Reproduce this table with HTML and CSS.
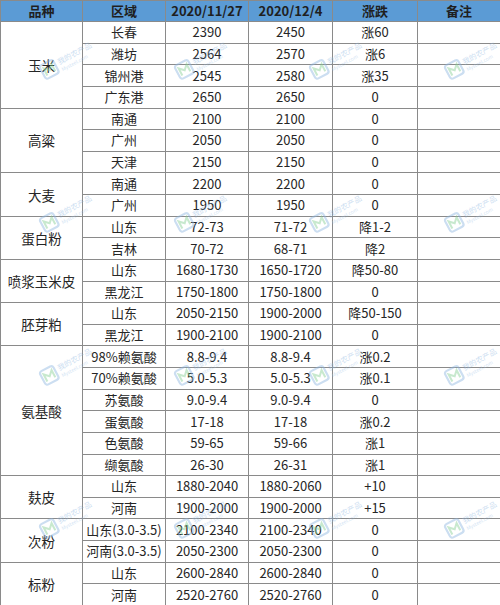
FILE: index.html
```html
<!DOCTYPE html>
<html lang="zh">
<head>
<meta charset="utf-8">
<title>价格表</title>
<link rel="stylesheet" href="styles.css">
</head>
<body>
<div class="page">
<table class="grid">
<colgroup>
<col class="c1"><col class="c2"><col class="c3"><col class="c4"><col class="c5"><col class="c6">
</colgroup>
<thead>
<tr><th>品种</th><th>区域</th><th>2020/11/27</th><th>2020/12/4</th><th>涨跌</th><th>备注</th></tr>
</thead>
<tbody>
<tr><td rowspan="4" class="kind">玉米</td><td>长春</td><td>2390</td><td>2450</td><td>涨60</td><td></td></tr>
<tr><td>潍坊</td><td>2564</td><td>2570</td><td>涨6</td><td></td></tr>
<tr><td>锦州港</td><td>2545</td><td>2580</td><td>涨35</td><td></td></tr>
<tr><td>广东港</td><td>2650</td><td>2650</td><td>0</td><td></td></tr>
<tr><td rowspan="3" class="kind">高粱</td><td>南通</td><td>2100</td><td>2100</td><td>0</td><td></td></tr>
<tr><td>广州</td><td>2050</td><td>2050</td><td>0</td><td></td></tr>
<tr><td>天津</td><td>2150</td><td>2150</td><td>0</td><td></td></tr>
<tr><td rowspan="2" class="kind">大麦</td><td>南通</td><td>2200</td><td>2200</td><td>0</td><td></td></tr>
<tr><td>广州</td><td>1950</td><td>1950</td><td>0</td><td></td></tr>
<tr><td rowspan="2" class="kind">蛋白粉</td><td>山东</td><td>72-73</td><td>71-72</td><td>降1-2</td><td></td></tr>
<tr><td>吉林</td><td>70-72</td><td>68-71</td><td>降2</td><td></td></tr>
<tr><td rowspan="2" class="kind">喷浆玉米皮</td><td>山东</td><td>1680-1730</td><td>1650-1720</td><td>降50-80</td><td></td></tr>
<tr><td>黑龙江</td><td>1750-1800</td><td>1750-1800</td><td>0</td><td></td></tr>
<tr><td rowspan="2" class="kind">胚芽粕</td><td>山东</td><td>2050-2150</td><td>1900-2000</td><td>降50-150</td><td></td></tr>
<tr><td>黑龙江</td><td>1900-2100</td><td>1900-2100</td><td>0</td><td></td></tr>
<tr><td rowspan="6" class="kind">氨基酸</td><td>98%赖氨酸</td><td>8.8-9.4</td><td>8.8-9.4</td><td>涨0.2</td><td></td></tr>
<tr><td>70%赖氨酸</td><td>5.0-5.3</td><td>5.0-5.3</td><td>涨0.1</td><td></td></tr>
<tr><td>苏氨酸</td><td>9.0-9.4</td><td>9.0-9.4</td><td>0</td><td></td></tr>
<tr><td>蛋氨酸</td><td>17-18</td><td>17-18</td><td>涨0.2</td><td></td></tr>
<tr><td>色氨酸</td><td>59-65</td><td>59-66</td><td>涨1</td><td></td></tr>
<tr><td>缬氨酸</td><td>26-30</td><td>26-31</td><td>涨1</td><td></td></tr>
<tr><td rowspan="2" class="kind">麸皮</td><td>山东</td><td>1880-2040</td><td>1880-2060</td><td>+10</td><td></td></tr>
<tr><td>河南</td><td>1900-2000</td><td>1900-2000</td><td>+15</td><td></td></tr>
<tr><td rowspan="2" class="kind">次粉</td><td>山东(3.0-3.5)</td><td>2100-2340</td><td>2100-2340</td><td>0</td><td></td></tr>
<tr><td>河南(3.0-3.5)</td><td>2050-2300</td><td>2050-2300</td><td>0</td><td></td></tr>
<tr><td rowspan="2" class="kind">标粉</td><td>山东</td><td>2600-2840</td><td>2600-2840</td><td>0</td><td></td></tr>
<tr><td>河南</td><td>2520-2760</td><td>2520-2760</td><td>0</td><td></td></tr>
</tbody>
</table>
<div class="marks" aria-hidden="true">
<div class="mark"><svg viewBox="0 0 60 24" width="60" height="24"><rect x="1.5" y="4" width="15" height="15" rx="2.5" fill="none" stroke="#8fb8e2" stroke-width="2.2"/><path d="M4.5 16 V8 L9 12.5 L13.5 8 V16" fill="none" stroke="#86cf95" stroke-width="2"/><text x="20" y="12" font-size="7.5" fill="#8fb8e2">我的农产品</text><text x="20" y="19.5" font-size="5" fill="#9fc4e8">Mysteel.com</text></svg></div>
<div class="mark"><svg viewBox="0 0 60 24" width="60" height="24"><rect x="1.5" y="4" width="15" height="15" rx="2.5" fill="none" stroke="#8fb8e2" stroke-width="2.2"/><path d="M4.5 16 V8 L9 12.5 L13.5 8 V16" fill="none" stroke="#86cf95" stroke-width="2"/><text x="20" y="12" font-size="7.5" fill="#8fb8e2">我的农产品</text><text x="20" y="19.5" font-size="5" fill="#9fc4e8">Mysteel.com</text></svg></div>
<div class="mark"><svg viewBox="0 0 60 24" width="60" height="24"><rect x="1.5" y="4" width="15" height="15" rx="2.5" fill="none" stroke="#8fb8e2" stroke-width="2.2"/><path d="M4.5 16 V8 L9 12.5 L13.5 8 V16" fill="none" stroke="#86cf95" stroke-width="2"/><text x="20" y="12" font-size="7.5" fill="#8fb8e2">我的农产品</text><text x="20" y="19.5" font-size="5" fill="#9fc4e8">Mysteel.com</text></svg></div>
<div class="mark"><svg viewBox="0 0 60 24" width="60" height="24"><rect x="1.5" y="4" width="15" height="15" rx="2.5" fill="none" stroke="#8fb8e2" stroke-width="2.2"/><path d="M4.5 16 V8 L9 12.5 L13.5 8 V16" fill="none" stroke="#86cf95" stroke-width="2"/><text x="20" y="12" font-size="7.5" fill="#8fb8e2">我的农产品</text><text x="20" y="19.5" font-size="5" fill="#9fc4e8">Mysteel.com</text></svg></div>
<div class="mark"><svg viewBox="0 0 60 24" width="60" height="24"><rect x="1.5" y="4" width="15" height="15" rx="2.5" fill="none" stroke="#8fb8e2" stroke-width="2.2"/><path d="M4.5 16 V8 L9 12.5 L13.5 8 V16" fill="none" stroke="#86cf95" stroke-width="2"/><text x="20" y="12" font-size="7.5" fill="#8fb8e2">我的农产品</text><text x="20" y="19.5" font-size="5" fill="#9fc4e8">Mysteel.com</text></svg></div>
<div class="mark"><svg viewBox="0 0 60 24" width="60" height="24"><rect x="1.5" y="4" width="15" height="15" rx="2.5" fill="none" stroke="#8fb8e2" stroke-width="2.2"/><path d="M4.5 16 V8 L9 12.5 L13.5 8 V16" fill="none" stroke="#86cf95" stroke-width="2"/><text x="20" y="12" font-size="7.5" fill="#8fb8e2">我的农产品</text><text x="20" y="19.5" font-size="5" fill="#9fc4e8">Mysteel.com</text></svg></div>
<div class="mark"><svg viewBox="0 0 60 24" width="60" height="24"><rect x="1.5" y="4" width="15" height="15" rx="2.5" fill="none" stroke="#8fb8e2" stroke-width="2.2"/><path d="M4.5 16 V8 L9 12.5 L13.5 8 V16" fill="none" stroke="#86cf95" stroke-width="2"/><text x="20" y="12" font-size="7.5" fill="#8fb8e2">我的农产品</text><text x="20" y="19.5" font-size="5" fill="#9fc4e8">Mysteel.com</text></svg></div>
<div class="mark"><svg viewBox="0 0 60 24" width="60" height="24"><rect x="1.5" y="4" width="15" height="15" rx="2.5" fill="none" stroke="#8fb8e2" stroke-width="2.2"/><path d="M4.5 16 V8 L9 12.5 L13.5 8 V16" fill="none" stroke="#86cf95" stroke-width="2"/><text x="20" y="12" font-size="7.5" fill="#8fb8e2">我的农产品</text><text x="20" y="19.5" font-size="5" fill="#9fc4e8">Mysteel.com</text></svg></div>
<div class="mark"><svg viewBox="0 0 60 24" width="60" height="24"><rect x="1.5" y="4" width="15" height="15" rx="2.5" fill="none" stroke="#8fb8e2" stroke-width="2.2"/><path d="M4.5 16 V8 L9 12.5 L13.5 8 V16" fill="none" stroke="#86cf95" stroke-width="2"/><text x="20" y="12" font-size="7.5" fill="#8fb8e2">我的农产品</text><text x="20" y="19.5" font-size="5" fill="#9fc4e8">Mysteel.com</text></svg></div>
<div class="mark"><svg viewBox="0 0 60 24" width="60" height="24"><rect x="1.5" y="4" width="15" height="15" rx="2.5" fill="none" stroke="#8fb8e2" stroke-width="2.2"/><path d="M4.5 16 V8 L9 12.5 L13.5 8 V16" fill="none" stroke="#86cf95" stroke-width="2"/><text x="20" y="12" font-size="7.5" fill="#8fb8e2">我的农产品</text><text x="20" y="19.5" font-size="5" fill="#9fc4e8">Mysteel.com</text></svg></div>
<div class="mark"><svg viewBox="0 0 60 24" width="60" height="24"><rect x="1.5" y="4" width="15" height="15" rx="2.5" fill="none" stroke="#8fb8e2" stroke-width="2.2"/><path d="M4.5 16 V8 L9 12.5 L13.5 8 V16" fill="none" stroke="#86cf95" stroke-width="2"/><text x="20" y="12" font-size="7.5" fill="#8fb8e2">我的农产品</text><text x="20" y="19.5" font-size="5" fill="#9fc4e8">Mysteel.com</text></svg></div>
<div class="mark"><svg viewBox="0 0 60 24" width="60" height="24"><rect x="1.5" y="4" width="15" height="15" rx="2.5" fill="none" stroke="#8fb8e2" stroke-width="2.2"/><path d="M4.5 16 V8 L9 12.5 L13.5 8 V16" fill="none" stroke="#86cf95" stroke-width="2"/><text x="20" y="12" font-size="7.5" fill="#8fb8e2">我的农产品</text><text x="20" y="19.5" font-size="5" fill="#9fc4e8">Mysteel.com</text></svg></div>
<div class="mark"><svg viewBox="0 0 60 24" width="60" height="24"><rect x="1.5" y="4" width="15" height="15" rx="2.5" fill="none" stroke="#8fb8e2" stroke-width="2.2"/><path d="M4.5 16 V8 L9 12.5 L13.5 8 V16" fill="none" stroke="#86cf95" stroke-width="2"/><text x="20" y="12" font-size="7.5" fill="#8fb8e2">我的农产品</text><text x="20" y="19.5" font-size="5" fill="#9fc4e8">Mysteel.com</text></svg></div>
<div class="mark"><svg viewBox="0 0 60 24" width="60" height="24"><rect x="1.5" y="4" width="15" height="15" rx="2.5" fill="none" stroke="#8fb8e2" stroke-width="2.2"/><path d="M4.5 16 V8 L9 12.5 L13.5 8 V16" fill="none" stroke="#86cf95" stroke-width="2"/><text x="20" y="12" font-size="7.5" fill="#8fb8e2">我的农产品</text><text x="20" y="19.5" font-size="5" fill="#9fc4e8">Mysteel.com</text></svg></div>
<div class="mark"><svg viewBox="0 0 60 24" width="60" height="24"><rect x="1.5" y="4" width="15" height="15" rx="2.5" fill="none" stroke="#8fb8e2" stroke-width="2.2"/><path d="M4.5 16 V8 L9 12.5 L13.5 8 V16" fill="none" stroke="#86cf95" stroke-width="2"/><text x="20" y="12" font-size="7.5" fill="#8fb8e2">我的农产品</text><text x="20" y="19.5" font-size="5" fill="#9fc4e8">Mysteel.com</text></svg></div>
<div class="mark"><svg viewBox="0 0 60 24" width="60" height="24"><rect x="1.5" y="4" width="15" height="15" rx="2.5" fill="none" stroke="#8fb8e2" stroke-width="2.2"/><path d="M4.5 16 V8 L9 12.5 L13.5 8 V16" fill="none" stroke="#86cf95" stroke-width="2"/><text x="20" y="12" font-size="7.5" fill="#8fb8e2">我的农产品</text><text x="20" y="19.5" font-size="5" fill="#9fc4e8">Mysteel.com</text></svg></div>
</div>
</div>
</body>
</html>
```
FILE: styles.css
```css
* { box-sizing: border-box; }
html, body { margin: 0; padding: 0; background: #fff; }
body {
  font-family: "Noto Sans CJK SC", "Noto Sans", sans-serif;
  font-size: 13px;
  color: #262626;
}
.page {
  position: relative;
  width: 500px;
  height: 605px;
  overflow: hidden;
}
.grid {
  width: 500px;
  table-layout: fixed;
  border-collapse: collapse;
}
.c1 { width: 82px; }
.c2 { width: 83px; }
.c3 { width: 83px; }
.c4 { width: 84px; }
.c5 { width: 85px; }
.c6 { width: 83px; }
.grid th, .grid td {
  border: 1px solid #8a8a8a;
  text-align: center;
  vertical-align: middle;
  padding: 0;
  line-height: 16px;
  white-space: nowrap;
}
.grid thead th {
  height: 21px;
  background: #5b9bd5;
  color: #1f1f1f;
  font-weight: 700;
  font-size: 13px;
}
.grid tbody tr { height: 21.63px; }
.grid td.kind { font-size: 13.5px; }
.marks {
  position: absolute;
  left: 0;
  top: -17px;
  display: grid;
  grid-template-columns: repeat(4, 135px);
  grid-template-rows: repeat(4, 153px);
  pointer-events: none;
}
.mark {
  display: flex;
  align-items: center;
  justify-content: center;
}
.mark svg {
  transform: rotate(-28deg);
  opacity: 0.45;
}
```
